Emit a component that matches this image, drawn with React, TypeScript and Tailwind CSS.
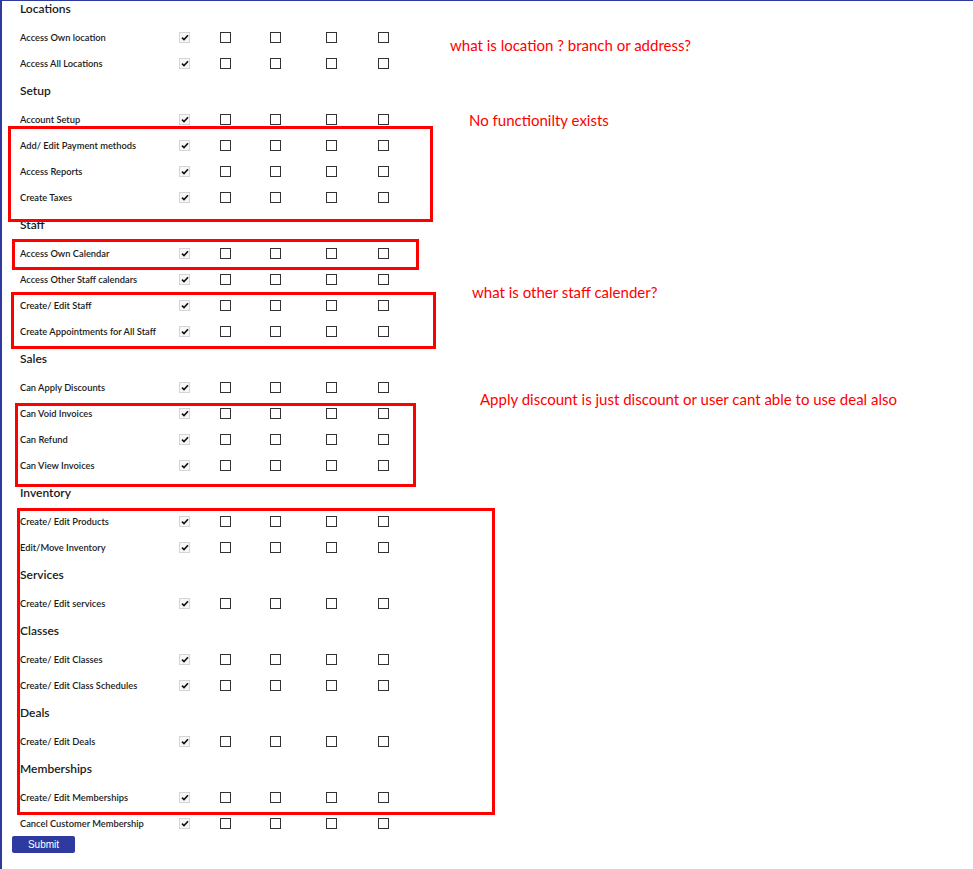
import React from "react";

type Item = { type: "h"; text: string } | { type: "r"; text: string };

const items: Item[] = [
  { type: "h", text: "Locations" },
  { type: "r", text: "Access Own location" },
  { type: "r", text: "Access All Locations" },
  { type: "h", text: "Setup" },
  { type: "r", text: "Account Setup" },
  { type: "r", text: "Add/ Edit Payment methods" },
  { type: "r", text: "Access Reports" },
  { type: "r", text: "Create Taxes" },
  { type: "h", text: "Staff" },
  { type: "r", text: "Access Own Calendar" },
  { type: "r", text: "Access Other Staff calendars" },
  { type: "r", text: "Create/ Edit Staff" },
  { type: "r", text: "Create Appointments for All Staff" },
  { type: "h", text: "Sales" },
  { type: "r", text: "Can Apply Discounts" },
  { type: "r", text: "Can Void Invoices" },
  { type: "r", text: "Can Refund" },
  { type: "r", text: "Can View Invoices" },
  { type: "h", text: "Inventory" },
  { type: "r", text: "Create/ Edit Products" },
  { type: "r", text: "Edit/Move Inventory" },
  { type: "h", text: "Services" },
  { type: "r", text: "Create/ Edit services" },
  { type: "h", text: "Classes" },
  { type: "r", text: "Create/ Edit Classes" },
  { type: "r", text: "Create/ Edit Class Schedules" },
  { type: "h", text: "Deals" },
  { type: "r", text: "Create/ Edit Deals" },
  { type: "h", text: "Memberships" },
  { type: "r", text: "Create/ Edit Memberships" },
  { type: "r", text: "Cancel Customer Membership" },
];

function Checked() {
  return (
    <div className="w-[11px] h-[11px] border border-[#d4d4d4] bg-[#f7f7f7] flex items-center justify-center">
      <svg width="8" height="7" viewBox="0 0 8 7">
        <path d="M1 3.6 L3 5.6 L7 1.2" fill="none" stroke="#111" strokeWidth="1.6" />
      </svg>
    </div>
  );
}

function Unchecked() {
  return <div className="w-[11px] h-[11px] border border-[#333] bg-white" />;
}

function Row({ text }: { text: string }) {
  return (
    <div className="grid grid-cols-[159px_41px_50px_56px_52px_11px] items-center h-[26px] pl-[8px]">
      <div className="text-[9.3px] font-semibold text-[#1a1a1a] whitespace-nowrap leading-[12px] pt-[1px]">{text}</div>
      <Checked />
      <Unchecked />
      <Unchecked />
      <Unchecked />
      <Unchecked />
    </div>
  );
}

function Header({ text }: { text: string }) {
  return (
    <div className="h-[30px] flex items-center pl-[8px] text-[12px] font-semibold text-[#1a1a1a] leading-none">
      {text}
    </div>
  );
}

function Note({ className, children }: { className: string; children: React.ReactNode }) {
  return (
    <div className={`absolute text-[15px] leading-[20px] text-[#ff0000] whitespace-nowrap ${className}`}>
      {children}
    </div>
  );
}

export default function App() {
  return (
    <div className="relative w-[973px] h-[869px] overflow-hidden bg-white border-l-2 border-t border-[#2f3a9e] font-['Lato',sans-serif]">
      <div className="-mt-[7px] pl-[10px] flex flex-col">
        {items.map((it, i) =>
          it.type === "h" ? <Header key={i} text={it.text} /> : <Row key={i} text={it.text} />
        )}
        <button className="w-[63px] h-[17px] rounded-[2px] bg-[#2e3a9f] text-white text-[10px] font-['Liberation_Sans',sans-serif] leading-none flex items-center justify-center">
          Submit
        </button>
      </div>

      {/* red annotation boxes drawn over the form */}
      <div className="absolute left-[6px] top-[125px] w-[425px] h-[96px] border-[3px] border-[#ff0000]" />
      <div className="absolute left-[10px] top-[238px] w-[407px] h-[31px] border-[3px] border-[#ff0000]" />
      <div className="absolute left-[9px] top-[291px] w-[425px] h-[57px] border-[3px] border-[#ff0000]" />
      <div className="absolute left-[13px] top-[402px] w-[401px] h-[84px] border-[3px] border-[#ff0000]" />
      <div className="absolute left-[15px] top-[507px] w-[478px] h-[307px] border-[3px] border-[#ff0000]" />

      <Note className="left-[448px] top-[34px]">what is location ? branch or address?</Note>
      <Note className="left-[467px] top-[109px]">No functionilty exists</Note>
      <Note className="left-[470px] top-[281px]">what is other staff calender?</Note>
      <Note className="left-[478px] top-[388px]">Apply discount is just discount or user cant able to use deal also</Note>
    </div>
  );
}
